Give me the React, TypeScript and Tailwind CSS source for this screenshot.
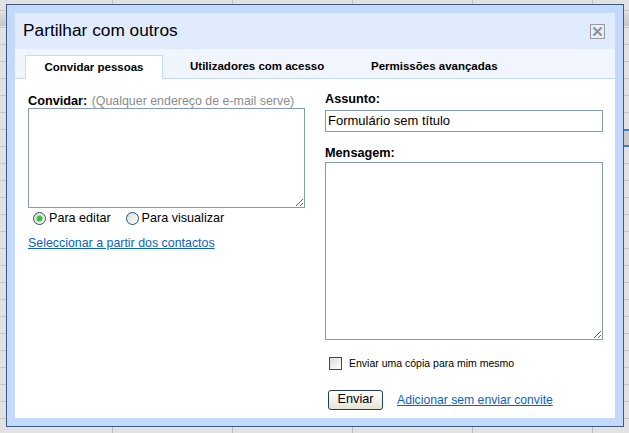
import React from "react";

function CloseBox() {
  return (
    <div className="w-[15px] h-[15px] border border-[#9a9a9a] bg-[#e6eefc] flex items-center justify-center">
      <svg width="13" height="13" viewBox="0 0 13 13">
        <path d="M2.5 2.5 L10.5 10.5 M10.5 2.5 L2.5 10.5" stroke="#8e8e8e" strokeWidth="2" />
      </svg>
    </div>
  );
}

function Radio({ checked }: { checked?: boolean }) {
  return (
    <div className="w-[13px] h-[13px] rounded-full border border-[#1c5180] bg-gradient-to-br from-[#dcdcd5] to-[#ffffff] flex items-center justify-center shrink-0">
      {checked && (
        <div className="w-[5px] h-[5px] rounded-full bg-[#3fb63a] shadow-[0_0_1px_1px_#8fdc86]" />
      )}
    </div>
  );
}

export default function App() {
  return (
    <div className="relative w-[629px] h-[433px] overflow-hidden bg-[#e2e2e2] bg-[linear-gradient(to_right,#bdbdbd_1px,transparent_1px),linear-gradient(to_bottom,#c6c6c6_1px,transparent_1px)] bg-[length:120px_17px] bg-[position:112px_10px] pt-[4px] pl-[6px] font-['Liberation_Sans',Arial,sans-serif] text-black">
      <div className="absolute left-0 top-[13px] w-full h-[13px] bg-gradient-to-b from-[#d9d9d9] to-[#c8c8c8]" />
      <div className="absolute left-[624px] top-[129px] w-[5px] h-[18px] bg-[#cacaca] border-y-2 border-[#4a78cf]" />

      <div className="relative z-10 w-[618px] h-[423px] border border-[#3b5a80] bg-[#c3d9ff] p-[8px]">
        <div className="w-full h-full bg-white flex flex-col">
          {/* Title */}
          <div className="h-[36px] shrink-0 bg-[#e0ecfe] flex items-center justify-between pl-[8px] pr-[10px]">
            <span className="text-[17.3px] leading-none">Partilhar com outros</span>
            <CloseBox />
          </div>

          {/* Tabs */}
          <div className="h-[30px] shrink-0 bg-[#f0f5fe] border-b border-[#c3d9ff] flex items-end pl-[10px] text-[11.5px] font-bold">
            <div className="w-[138px] h-[24px] -mb-px bg-white border border-b-0 border-[#c3d9ff] flex items-center justify-center">
              Convidar pessoas
            </div>
            <div className="h-[24px] -mb-px flex items-center pl-[27px] w-[208px]">
              Utilizadores com acesso
            </div>
            <div className="h-[24px] -mb-px flex items-center">
              Permissões avançadas
            </div>
          </div>

          {/* Content */}
          <div className="flex pl-[13px] pt-[13px] gap-[20px]">
            {/* Left */}
            <div className="w-[277px] flex flex-col">
              <div className="h-[15px] leading-[15px] whitespace-nowrap">
                <span className="text-[12.7px] font-bold">Convidar:</span>{" "}
                <span className="text-[12.4px] text-[#8c8c8c]">(Qualquer endereço de e-mail serve)</span>
              </div>
              <textarea className="mt-[1px] w-[277px] h-[100px] border border-[#7f9db9] outline-none text-[13px] p-[2px]" />
              <div className="mt-[4px] h-[13px] flex items-center text-[12.6px] whitespace-nowrap">
                <div className="ml-[5px]"><Radio checked /></div>
                <span className="ml-[3px]">Para editar</span>
                <div className="ml-[15px]"><Radio /></div>
                <span className="ml-[3px]">Para visualizar</span>
              </div>
              <a className="mt-[11px] text-[12.4px] leading-[14px] text-[#0b62cc] underline whitespace-nowrap cursor-pointer">
                Seleccionar a partir dos contactos
              </a>
            </div>

            {/* Right */}
            <div className="w-[278px] flex flex-col">
              <div className="h-[15px] leading-[15px] text-[12.7px] font-bold">Assunto:</div>
              <div className="mt-[3px] h-[22px] border border-[#7f9db9] flex items-center pl-[2px] text-[13px]">
                Formulário sem título
              </div>
              <div className="mt-[14px] h-[15px] leading-[15px] text-[12.7px] font-bold">Mensagem:</div>
              <textarea className="mt-[1px] w-[278px] h-[178px] border border-[#7f9db9] outline-none text-[13px] p-[2px]" />
              <div className="mt-[17px] h-[13px] flex items-center">
                <div className="ml-[4px] w-[13px] h-[13px] border border-[#1c5180] bg-gradient-to-br from-[#dcdcd5] to-[#ffffff]" />
                <span className="ml-[7px] text-[10.5px] whitespace-nowrap">Enviar uma cópia para mim mesmo</span>
              </div>
              <div className="mt-[20px] flex items-center">
                <div className="ml-[3px] w-[55px] h-[20px] rounded-[3px] border border-[#1f3d63] bg-gradient-to-b from-[#ffffff] to-[#e6e3d6] flex items-center justify-center text-[12.7px]">
                  Enviar
                </div>
                <a className="ml-[14px] text-[12.2px] text-[#0b62cc] underline whitespace-nowrap cursor-pointer">
                  Adicionar sem enviar convite
                </a>
              </div>
            </div>
          </div>
        </div>
      </div>
    </div>
  );
}
